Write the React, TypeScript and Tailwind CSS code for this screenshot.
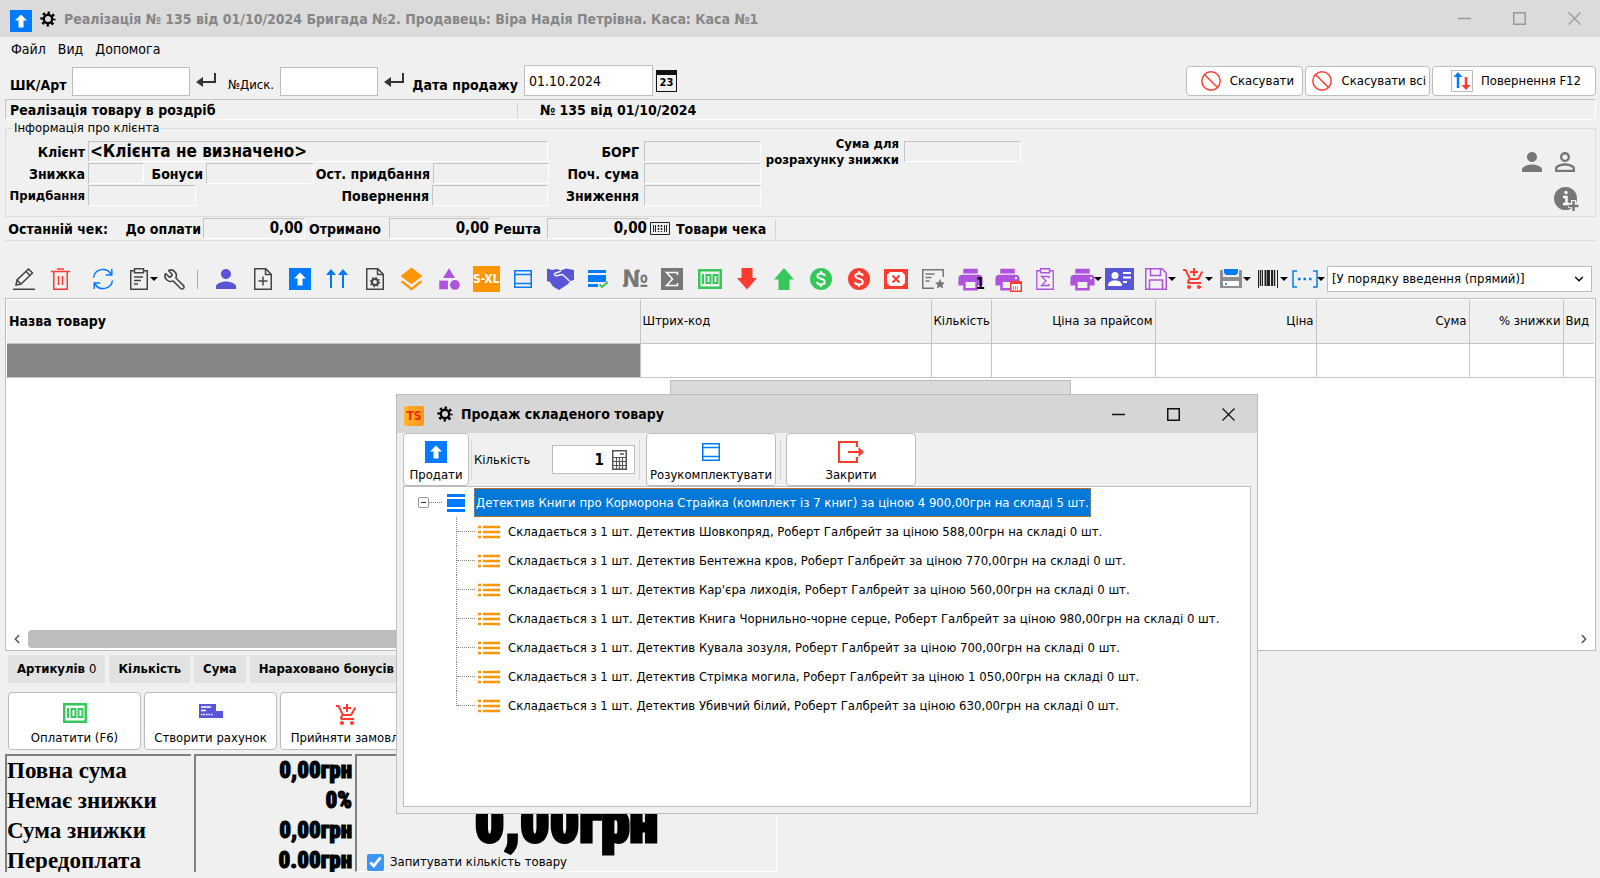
import React, { useState } from 'react';
import { MdAddShoppingCart, MdCategory, MdLayers, MdPerson, MdPersonOutline, MdPrint } from 'react-icons/md';
import { Ban, ChevronDown, ChevronLeft, ChevronRight, Wrench } from 'lucide-react';

interface IconProps {
  w?: number;
  h?: number;
  color?: string;
  children: React.ReactNode;
}

// Pixel-grid icon: one viewBox unit is one pixel
const Icon: React.FC<IconProps> = ({ w = 22, h = 22, color = '#444', children }) => (
  <svg width={w} height={h} viewBox={`0 0 ${w} ${h}`} fill="none" stroke={color} strokeWidth="1.5" className="shrink-0" aria-hidden="true">
    {children}
  </svg>
);

const BLUE = '#007aff';
const RED = '#ff3b30';
const GREEN = '#34c759';
const PURPLE = '#af52de';
const INDIGO = '#5856d6';
const ORANGE = '#ff9500';

const UpBox = () => (
  <Icon>
    <rect width="22" height="22" fill={BLUE} stroke="none" />
    <path d="M11 4.5l6 6h-3.5v7h-5v-7H5z" fill="#fff" stroke="none" />
  </Icon>
);

const Gear = () => (
  <Icon w={16} h={16} color="#000">
    <circle cx="8" cy="8" r="4.2" strokeWidth="2.4" />
    <circle cx="8" cy="8" r="6.3" strokeWidth="2.6" strokeDasharray="2.4 2.55" strokeDashoffset="1.2" />
  </Icon>
);

const EnterArrow = () => (
  <Icon w={20} h={16} color="#333">
    <path d="M19 1v9H5" strokeWidth="2" />
    <path d="M0 10l7-5v10z" fill="#333" stroke="none" />
  </Icon>
);

const Bill = () => (
  <Icon w={24} h={20} color={GREEN}>
    <rect x="1.25" y="1.25" width="21.5" height="17.5" strokeWidth="2.5" />
    <path d="M5 5v10" strokeWidth="2" />
    <rect x="8.5" y="6" width="4" height="8" strokeWidth="2" />
    <rect x="15.5" y="6" width="4" height="8" strokeWidth="2" />
  </Icon>
);

const Cart = () => <MdAddShoppingCart size={24} color={RED} />;

const TableBox = () => (
  <Icon w={18} h={18} color={BLUE}>
    <path d="M.75.75h16.5v16.5H.75zM1 4.5h16M1 13.5h16" />
  </Icon>
);

const Dollar: React.FC<{ color: string }> = ({ color }) => (
  <Icon color={color}>
    <circle cx="11" cy="11" r="11" fill={color} stroke="none" />
    <path d="M14.8 8c-.3-1.7-1.7-2.5-3.8-2.5S7.4 6.500 7.400 8c0 3.600 7.400 2 7.400 6 0 1.700-1.500 2.600-3.800 2.600S7.300 15.600 7 14M11 3v2.500M11 16.500V19" stroke="#fff" strokeWidth="2" />
  </Icon>
);

const Page: React.FC<{ children: React.ReactNode }> = ({ children }) => (
  <Icon w={18}>
    <path d="M.75.75h11l5.500 5.500v15H.75zM11.500 1v5.500H17" />
    {children}
  </Icon>
);

const Star = () => <path d="M18 11l1.500 3.200 3.500.4-2.600 2.300.8 3.600-3.200-1.800-3.200 1.800.8-3.600-2.600-2.300 3.500-.4z" fill="#777" stroke="none" />;

const tools: { label: string; icon: React.ReactNode; menu?: boolean }[] = [
  { label: 'Клієнт', icon: <MdPerson size={30} color={INDIGO} /> },
  { label: 'Новий документ', icon: <Page><path d="M9 8.500v9M4.500 13h9" /></Page> },
  { label: 'Продати', icon: <UpBox /> },
  {
    label: 'Підняти всі',
    icon: <Icon color={BLUE}><path d="M5 2v18M17 2v18" strokeWidth="2" /><path d="M0 7l5-6 5 6zM12 7l5-6 5 6z" fill={BLUE} stroke="none" /></Icon>,
  },
  { label: 'Налаштування документа', icon: <Page><circle cx="9" cy="14" r="3" strokeWidth="2" /><circle cx="9" cy="14" r="4.500" strokeDasharray="1.600 1.900" /></Page> },
  { label: 'Шари', icon: <MdLayers size={29} color={ORANGE} /> },
  { label: 'Категорії', icon: <MdCategory size={26} color={PURPLE} /> },
  {
    label: 'Розміри',
    icon: <span className="flex h-[26px] w-[27px] items-center justify-center bg-[#ff9500] text-[12px] leading-none font-bold text-white">S-XL</span>,
  },
  { label: 'Комплект', icon: <TableBox /> },
  {
    label: 'Угода',
    icon: (
      <Icon w={27} color="#f0f0f0">
        <path d="M0 .500l5 1.500 5-1 4 1.500L19 .500l8 1.500v10l-4 1-2 3-9 6-6-3.500L3 14l-3-1z" fill={INDIGO} stroke="none" />
        <path d="M14 3L7.500 5.500c-1 2 2 3 5 1.500l3-.5 7 6.500" strokeWidth="1.400" />
      </Icon>
    ),
  },
  {
    label: 'Перевірити список',
    icon: <Icon color={BLUE}><path d="M1 2h18v3H1zM1 7h18v7H1zM1 16h10v3H1z" fill={BLUE} stroke="none" /><path d="M12.500 16.500l2.500 2.500 6-5" stroke={GREEN} strokeWidth="2" /></Icon>,
  },
  { label: 'Номер', icon: <span className="text-[24px] leading-none font-bold text-[#777]">№</span> },
  {
    label: 'Підсумок',
    icon: <Icon><rect width="22" height="22" fill="#777" stroke="none" /><path d="M16.500 7V4.500h-11L11.500 11l-6 6.500h11V15" stroke="#fff" /></Icon>,
  },
  { label: 'Оплата', icon: <Bill /> },
  { label: 'Вниз', icon: <Icon><path d="M5.500 0h11v10H21L11 21.500 1 10h4.500z" fill={RED} stroke="none" /></Icon> },
  { label: 'Вгору', icon: <Icon><path d="M5.500 22h11V11.500H21L11 0 1 11.500h4.500z" fill={GREEN} stroke="none" /></Icon> },
  { label: 'Внести гроші', icon: <Dollar color={GREEN} /> },
  { label: 'Вилучити гроші', icon: <Dollar color={RED} /> },
  {
    label: 'Скасувати оплату',
    icon: <Icon w={24} h={20} color={RED}><rect width="24" height="20" fill={RED} stroke="none" /><path d="M6 3h12l3 3v8l-3 3H6l-3-3V6z" fill="#fff" stroke="none" /><path d="M8.500 6.500l7 7M15.500 6.500l-7 7" strokeWidth="2" /></Icon>,
  },
  { label: 'Сертифікат', icon: <Icon color="#777"><path d="M12 20.250H.75V1.750h20.500V9M3.500 6h9M3.500 9.500h6M3.500 13h4" /><Star /></Icon> },
  {
    label: 'Друк 1',
    icon: (
      <span className="relative flex">
        <MdPrint size={29} color={PURPLE} />
        <span className="absolute right-0 bottom-[2px] font-['DejaVu_Sans_Mono',monospace] text-[15px] leading-none font-bold text-black">1</span>
      </span>
    ),
  },
  {
    label: 'Друк за датою',
    icon: (
      <span className="relative flex">
        <MdPrint size={29} color={PURPLE} />
        <span className="absolute right-0 bottom-[2px]">
          <Icon w={12} h={11} color={RED}><path d="M.75.75h10.500v9.500H.75z" fill="#fff" /><path d="M0 2h12" strokeWidth="2" /><path d="M3 6h6M3 8h6" stroke="#444" strokeWidth="1" strokeDasharray="1 1" /></Icon>
        </span>
      </span>
    ),
  },
  {
    label: 'Звіт',
    icon: <Icon w={18} color={PURPLE}><path d="M4 2.750H.75v18.500h16.500V2.750H14M4.500.75h9v4h-9zM13 10V8.500H5.500L10 13l-4.500 4.500H13V16" strokeWidth="1.300" /></Icon>,
  },
  { label: 'Друк', icon: <MdPrint size={29} color={PURPLE} />, menu: true },
  {
    label: 'Картка клієнта',
    icon: <Icon w={29}><rect width="29" height="22" fill={INDIGO} stroke="none" /><circle cx="10" cy="7.500" r="3.500" fill="#fff" stroke="none" /><path d="M3 18c0-4 3-5.500 7-5.500s7 1.500 7 5.500z" fill="#fff" stroke="none" /><path d="M18 5h8M18 9.500h8M18 14h4" stroke="#fff" strokeWidth="2" /></Icon>,
  },
  {
    label: 'Зберегти',
    icon: <Icon color={PURPLE}><path d="M.75.75H17l4.250 4.250v16.250H.75zM5.500 1v6.500h10V1M4.500 21v-9h13v9" /></Icon>,
    menu: true,
  },
  { label: 'Кошик', icon: <Cart />, menu: true },
  {
    label: 'Диск',
    icon: <Icon><path d="M0 2h3v7h16V2h3v18H0z" fill="#8e8e93" stroke="none" /><path d="M4 1h14v4l-2 2H6L4 5z" fill={BLUE} stroke="none" /><path d="M3 13h16v5H3z" fill="#fff" stroke="none" /><path d="M5 16h2" stroke={BLUE} /></Icon>,
    menu: true,
  },
  {
    label: 'Штрих-код',
    icon: <Icon w={20} h={18} color="#222"><path d="M.500 0v18M4.500 0v16M19.500 0v18" strokeWidth="1" /><path d="M2.500 0v16M16.500 0v16" strokeWidth="1.500" /><path d="M7.500 0v16M14 0v16" strokeWidth="2" /><path d="M10.500 0v16" strokeWidth="3" /></Icon>,
    menu: true,
  },
  {
    label: 'Інтервал',
    icon: <Icon w={26} h={18} color={BLUE}><path d="M5 1H1v16h4M21 1h4v16h-4" /><path d="M6 9h14" strokeWidth="2.500" strokeDasharray="2.500 3" /></Icon>,
    menu: true,
  },
];

const ToolButton: React.FC<{ label: string; menu?: boolean; children: React.ReactNode }> = ({ label, menu, children }) => (
  <button aria-label={label} className="relative flex h-7 flex-1 items-center justify-center">
    {children}
    {menu && <span className="absolute -right-px border-x-4 border-t-4 border-x-transparent border-t-black" />}
  </button>
);

// Sunken read-only cell
const Cell: React.FC<{ className: string; children?: React.ReactNode }> = ({ className, children }) => (
  <output className={`block h-[21px] shrink-0 border border-t-[#c4c4c4] border-r-white border-b-white border-l-[#c4c4c4] ${className}`}>{children}</output>
);

const Label: React.FC<{ className: string; children: React.ReactNode }> = ({ className, children }) => (
  <span className={`flex shrink-0 justify-end font-bold whitespace-nowrap ${className}`}>{children}</span>
);

const columns = [
  { title: 'Назва товару', width: 'w-auto', align: 'text-left text-[14px] font-bold' },
  { title: 'Штрих-код', width: 'w-[291px]', align: 'text-left font-normal' },
  { title: 'Кількість', width: 'w-[60px]', align: 'text-right font-normal' },
  { title: 'Ціна за прайсом', width: 'w-[164px]', align: 'text-right font-normal' },
  { title: 'Ціна', width: 'w-[161px]', align: 'text-right font-normal' },
  { title: 'Сума', width: 'w-[153px]', align: 'text-right font-normal' },
  { title: '% знижки', width: 'w-[94px]', align: 'text-right font-normal' },
  { title: 'Вид', width: 'w-[31px]', align: 'text-left font-normal' },
];

const books = [
  { title: 'Шовкопряд', price: '588,00' },
  { title: 'Бентежна кров', price: '770,00' },
  { title: "Кар'єра лиходія", price: '560,00' },
  { title: 'Книга Чорнильно-чорне серце', price: '980,00' },
  { title: 'Кувала зозуля', price: '700,00' },
  { title: 'Стрімка могила', price: '1 050,00' },
  { title: 'Убивчий білий', price: '630,00' },
];

const totals = [
  { label: 'Повна сума', value: '0,00грн' },
  { label: 'Немає знижки', value: '0%' },
  { label: 'Сума знижки', value: '0,00грн' },
  { label: 'Передоплата', value: '0.00грн' },
];

const WindowButtons: React.FC<{ color: string }> = ({ color }) => (
  <div className="ml-auto flex items-center gap-[42px]">
    <button aria-label="Згорнути"><Icon w={13} h={13} color={color}><path d="M0 6.500h13" /></Icon></button>
    <button aria-label="Розгорнути"><Icon w={13} h={13} color={color}><path d="M.75.75h11.500v11.500H.75z" /></Icon></button>
    <button aria-label="Закрити вікно"><Icon w={13} h={13} color={color}><path d="M.500.500l12 12M12.500.500l-12 12" strokeWidth="1.200" /></Icon></button>
  </div>
);

const SaleDialog = () => {
  const [quantity, setQuantity] = useState('1');
  const button = 'flex h-[53px] shrink-0 flex-col items-center justify-between rounded border border-[#bdbdbd] bg-white pt-[7px] pb-[2px] whitespace-nowrap';

  return (
    <div role="dialog" aria-labelledby="dialog-title" className="absolute top-[394px] left-[396px] w-[862px] border border-[#bdbdbd] bg-[#f0f0f0]">
      <div className="flex h-[38px] items-center bg-[#d6d6d6] pr-[22px] pl-[7px]">
        <span className="mt-1 flex size-5 items-center justify-center rounded-[2px] bg-linear-to-r from-[#ffb629] to-[#ff961a] text-[12px] font-bold text-[#f02a10]">TS</span>
        <span className="ml-[13px]"><Gear /></span>
        <h2 id="dialog-title" className="ml-2 text-[14px] font-bold">Продаж складеного товару</h2>
        <WindowButtons color="#111" />
      </div>
      <div className="px-[6px] pb-[6px]">
        <div className="flex h-[53px] items-center">
          <button className={`w-[66px] ${button}`}><UpBox />Продати</button>
          <span className="mx-[2px] h-10 w-px bg-[#d4d4d4]" />
          <label htmlFor="quantity" className="w-[78px]">Кількість</label>
          <div className="flex h-[29px] w-[83px] items-center border border-[#bdbdbd] bg-white pr-[7px]">
            <input id="quantity" value={quantity} onChange={(e) => setQuantity(e.target.value)} className="w-full min-w-0 pr-2 text-right text-[15px] font-bold outline-none" />
            <Icon w={15} h={20} color="#555">
              <path d="M.75.75h13.500v18.500H.75z" />
              <path d="M8 4h4" strokeWidth="1.500" />
              <path d="M1 7.500h13M1 11.500h13M1 15.500h13M4.500 7v12M7.500 7v12M10.500 7v12" strokeWidth="1.200" />
            </Icon>
          </div>
          <span className="ml-1 mr-[6px] h-10 w-px bg-[#d4d4d4]" />
          <button className={`w-[130px] ${button}`}><span className="pt-[2px]"><TableBox /></span>Розукомплектувати</button>
          <span className="mx-[4px] h-10 w-px bg-[#d4d4d4]" />
          <button className={`ml-px w-[130px] ${button}`}>
            <Icon w={26} color={RED}>
              <path d="M19 6V1H1v20h18v-5" strokeWidth="2" />
              <path d="M10 11h12" strokeWidth="2" />
              <path d="M20.500 6L26 11l-5.500 5z" fill={RED} stroke="none" />
            </Icon>
            Закрити
          </button>
        </div>
        <div role="tree" className="h-[321px] border border-[#bdbdbd] bg-white pt-px">
          <div role="treeitem" className="flex h-[29px] items-center pl-[14px]">
            <button aria-label="Згорнути гілку" className="flex size-[11px] items-center justify-center rounded-[2px] border border-[#999]"><span className="h-px w-[5px] bg-[#335]" /></button>
            <span className="w-[13px] border-t border-dotted border-[#888]" />
            <span className="ml-[5px]">
              <Icon w={18} h={18}><path d="M0 0h18v3H0zM0 5h18v8H0zM0 15h18v3H0z" fill={BLUE} stroke="none" /></Icon>
            </span>
            <span className="ml-[9px] flex h-[29px] items-center border border-dotted border-[#d98a3a] bg-[#0078d7] px-px whitespace-nowrap text-white">
              Детектив Книги про Корморона Страйка (комплект із 7 книг) за ціною 4 900,00грн на складі 5 шт.
            </span>
          </div>
          {books.map((book, index) => (
            <div key={book.title} role="treeitem" className="flex h-[29px] items-center pl-[52px]">
              <span className={`w-px self-start border-l border-dotted border-[#888] ${index === books.length - 1 ? 'h-[15px]' : 'h-[29px]'}`} />
              <span className="w-[18px] border-t border-dotted border-[#888]" />
              <span className="ml-[3px]">
                <Icon w={22} h={14} color={ORANGE}>
                  <path d="M5 2h17M5 7h17M5 12h17M0 2h3M0 7h3M0 12h3" strokeWidth="2.400" />
                </Icon>
              </span>
              <span className="ml-2 whitespace-nowrap">
                Складається з 1 шт. Детектив {book.title}, Роберт Галбрейт за ціною {book.price}грн на складі 0 шт.
              </span>
            </div>
          ))}
        </div>
      </div>
    </div>
  );
};

export default function App() {
  const [date, setDate] = useState('01.10.2024');
  const [ask, setAsk] = useState(true);
  const field = 'border border-[#bdbdbd] bg-white outline-none';
  const topButton = 'flex h-[30px] items-center justify-end rounded border border-[#bdbdbd] bg-white whitespace-nowrap';
  const payButton = 'flex h-[58px] w-[133px] shrink-0 flex-col items-center justify-between rounded border border-[#bdbdbd] bg-white pt-[10px] pb-[3px] whitespace-nowrap';
  const chip = 'flex h-7 items-center bg-[#e1e3e2] px-[9px] font-bold whitespace-nowrap';

  return (
    <div className="relative flex min-h-screen flex-col overflow-hidden bg-[#f0f0f0] pb-[6px] font-['DejaVu_Sans_Condensed','Noto_Sans',sans-serif] text-[13px] leading-4 text-black">
      {/* Title bar */}
      <header className="flex h-[37px] items-center bg-[#dbdbdb] pr-[19px] pl-[10px]">
        <span className="mt-[5px]"><UpBox /></span>
        <span className="ml-2"><Gear /></span>
        <h1 className="ml-2 text-[14px] font-bold text-[#868686]">Реалізація № 135 від 01/10/2024 Бригада №2. Продавець: Віра Надія Петрівна. Каса: Каса №1</h1>
        <WindowButtons color="#999" />
      </header>

      <nav className="flex h-6 items-center gap-3 pl-[11px] text-[14px]">
        <button>Файл</button>
        <button>Вид</button>
        <button>Допомога</button>
      </nav>

      {/* Scan row */}
      <div className="flex h-[38px] items-end gap-[6px] pr-1 pb-[3px] pl-[10px]">
        <label htmlFor="sku" className="mb-[3px] w-[56px] text-[14px] font-bold whitespace-nowrap">ШК/Арт</label>
        <input id="sku" className={`h-[29px] w-[118px] ${field}`} />
        <button aria-label="Знайти товар" className="mb-2"><EnterArrow /></button>
        <label htmlFor="card" className="mb-[3px] w-[52px] text-right">№Диск.</label>
        <input id="card" className={`h-[29px] w-[98px] ${field}`} />
        <button aria-label="Знайти картку" className="mb-2"><EnterArrow /></button>
        <label htmlFor="date" className="mb-[3px] w-[108px] text-right text-[14px] font-bold whitespace-nowrap">Дата продажу</label>
        <div className="flex items-center gap-[3px]">
          <input id="date" value={date} onChange={(e) => setDate(e.target.value)} className={`h-[31px] w-[129px] px-1 text-[14px] ${field}`} />
          <button aria-label="Календар" className="flex h-[22px] w-[21px] items-center justify-center border border-t-[5px] border-[#111] text-[11px] leading-none font-bold">23</button>
        </div>
        <div className="ml-auto flex gap-[2px]">
          <button className={`w-[117px] gap-2 pr-[8px] ${topButton}`}><Ban size={22} strokeWidth={1.6} color={RED} />Скасувати</button>
          <button className={`w-[125px] gap-2 pr-[3px] ${topButton}`}><Ban size={22} strokeWidth={1.6} color={RED} />Скасувати всі</button>
          <button className={`w-[164px] gap-2 pr-[14px] ${topButton}`}>
            <Icon>
              <path d="M.500.500h21v21H.500z" stroke="#bbb" strokeWidth="1" />
              <path d="M7 4v14" stroke={BLUE} strokeWidth="2.500" />
              <path d="M2.500 7L7 2l4.500 5z" fill={BLUE} stroke="none" />
              <path d="M15 7v10" stroke={RED} strokeWidth="2.500" />
              <path d="M10.500 15l4.500 5 4.500-5z" fill={RED} stroke="none" />
            </Icon>
            Повернення F12
          </button>
        </div>
      </div>

      <div className="mr-1 ml-[5px] flex h-[21px] items-center border border-t-[#c4c4c4] border-r-white border-b-white border-l-[#c4c4c4] text-[14px] font-bold">
        <span className="flex h-4 w-[512px] items-center border-r border-[#d4d4d4] pl-1">Реалізація товару в роздріб</span>
        <span className="pl-[22px]">№ 135 від 01/10/2024</span>
      </div>

      {/* Client info */}
      <fieldset className="mr-1 ml-[5px] flex h-[97px] border border-[#dcdcdc]">
        <legend className="ml-[7px] px-px text-[13px]">Інформація про клієнта</legend>
        <div className="flex w-full items-start pt-[5px] text-[14px]">
          <div className="flex flex-col gap-px">
            <div className="flex items-center gap-[3px]">
              <Label className="w-[79px]">Клієнт</Label>
              <Cell className="w-[460px] pl-px text-[17px] leading-[18px] font-bold">&lt;Клієнта не визначено&gt;</Cell>
            </div>
            <div className="flex items-center gap-[3px]">
              <Label className="w-[79px]">Знижка</Label>
              <Cell className="w-[56px]" />
              <Label className="w-[56px]">Бонуси</Label>
              <Cell className="w-[108px]" />
              <Label className="w-[113px]">Ост. придбання</Label>
              <Cell className="w-[116px]" />
            </div>
            <div className="flex items-center gap-[3px]">
              <Label className="w-[79px] text-[13px]">Придбання</Label>
              <Cell className="w-[108px]" />
              <Label className="w-[230px]">Повернення</Label>
              <Cell className="w-[116px]" />
            </div>
          </div>
          <div className="flex flex-col gap-px">
            {['БОРГ', 'Поч. сума', 'Зниження'].map((label) => (
              <div key={label} className="flex items-center gap-[5px]">
                <Label className="w-[90px]">{label}</Label>
                <Cell className="w-[117px]" />
              </div>
            ))}
          </div>
          <div className="flex gap-[5px] text-[13px]">
            <div className="-mt-[5px] w-[138px]">
              <Label className="w-full">Сума для</Label>
              <Label className="w-full">розрахунку знижки</Label>
            </div>
            <Cell className="w-[117px]" />
          </div>
          <div className="mt-[6px] mr-[15px] ml-auto flex w-[63px] flex-wrap justify-between gap-y-[10px]">
            <button aria-label="Обрати клієнта"><MdPerson size={30} color="#777" /></button>
            <button aria-label="Очистити клієнта"><MdPersonOutline size={30} color="#777" /></button>
            <button aria-label="Інформація" className="mr-px ml-auto">
              <Icon w={25} h={25}>
                <circle cx="11.500" cy="11.500" r="11.500" fill="#777" stroke="none" />
                <path d="M9 10h3.500v7M9 17h7" stroke="#fff" strokeWidth="2.400" />
                <circle cx="12" cy="5.500" r="1.700" fill="#fff" stroke="none" />
                <path d="M19.500 13v11M14 18.500h11" stroke="#f0f0f0" strokeWidth="5" />
                <path d="M19.500 14v10M14.500 19h10" stroke="#777" strokeWidth="2.400" />
              </Icon>
            </button>
          </div>
        </div>
      </fieldset>

      {/* Last receipt */}
      <div className="mr-1 ml-[5px] flex h-6 items-center border-b border-[#dcdcdc] pl-[5px] text-[14px]">
        <Label className="w-[98px]">Останній чек:</Label>
        <Label className="w-[95px] pr-[2px]">До оплати</Label>
        <Cell className="w-[102px] pr-px text-right text-[15px] leading-[18px] font-bold">0,00</Cell>
        <Label className="w-[84px] pr-2">Отримано</Label>
        <Cell className="w-[102px] pr-px text-right text-[15px] leading-[18px] font-bold">0,00</Cell>
        <Label className="w-[56px] pr-[6px]">Решта</Label>
        <Cell className="w-[102px] pr-px text-right text-[15px] leading-[18px] font-bold">0,00</Cell>
        <button className="flex items-center gap-[6px] pl-px font-bold whitespace-nowrap">
          <Icon w={20} h={13} color="#222">
            <path d="M.500.500h19v12H.500z" strokeWidth="1" />
            <path d="M3.500 3v7M5.500 3v7M14.500 3v7M16.500 3v7" strokeWidth="1" />
            <path d="M8.500 3v7M11.500 3v7" strokeWidth="1.500" strokeDasharray="2 1" />
          </Icon>
          Товари чека
        </button>
        <span className="ml-[9px] h-5 w-px bg-[#d4d4d4]" />
      </div>

      {/* Toolbar */}
      <div className="mt-[23px] mr-2 ml-[6px] flex h-[30px] items-center">
        <div className="flex w-[187px] items-center">
          <ToolButton label="Редагувати"><Icon><path d="M0 21.250h22M3 17l1-5L15.500 1l4 4L8 16zM13 3.500l4 4M4 12l4 4" /></Icon></ToolButton>
          <ToolButton label="Видалити"><Icon w={19} color={RED}><path d="M0 3.500h19M6 1h7M2.750 4v17.250h13.500V4M7.500 8v9M11.500 8v9" /></Icon></ToolButton>
          <span className="w-[6px]" />
          <ToolButton label="Оновити"><Icon color={BLUE}><path d="M1.500 9.500A9.500 9.500 0 0 1 19 6M20.500 12.500A9.500 9.500 0 0 1 3 16M19.800 1v6h-6M2.200 21v-6h6" /></Icon></ToolButton>
          <ToolButton label="Буфер" menu><Icon w={18}><path d="M4 2.750H.75v18.500h16.500V2.750H14M4.500.75h9v4h-9zM4 9h9M4 12.500h7M4 16h4" /></Icon></ToolButton>
          <ToolButton label="Сервіс"><Wrench size={23} strokeWidth={1.6} color="#444" className="-scale-x-100" /></ToolButton>
        </div>
        <span className="mr-[9px] ml-1 h-[19px] w-px bg-[#aaa]" />
        <div className="flex flex-1 items-center">
          {tools.map((tool) => (
            <ToolButton key={tool.label} label={tool.label} menu={tool.menu}>{tool.icon}</ToolButton>
          ))}
        </div>
        <div className="relative ml-[3px] flex w-[265px] items-center">
          <select aria-label="Порядок сортування" className="h-[26px] w-full appearance-none border border-[#bdbdbd] bg-white px-1 text-[13px] outline-none">
            <option>[У порядку введення (прямий)]</option>
          </select>
          <ChevronDown size={14} strokeWidth={2.4} className="pointer-events-none absolute right-[6px]" />
        </div>
      </div>

      {/* Goods table */}
      <div className="mt-1 mr-1 ml-[5px] flex min-h-[352px] flex-1 flex-col border border-[#bdbdbd] bg-white px-px pt-px pb-[2px]">
        <table className="w-full table-fixed border-collapse">
          <thead>
            <tr className="h-[43px] bg-[#f0f0f0]">
              {columns.map((column) => (
                <th key={column.title} className={`border-r border-b border-[#c4c4c4] px-[2px] whitespace-nowrap last:border-r-0 ${column.width} ${column.align}`}>{column.title}</th>
              ))}
            </tr>
          </thead>
          <tbody>
            <tr className="h-[34px]">
              {columns.map((column) => (
                <td key={column.title} className="border-r border-b border-[#c4c4c4] first:bg-[#858585] last:border-r-0" />
              ))}
            </tr>
          </tbody>
        </table>
        <div className="mt-auto flex h-[19px] items-center justify-between px-[3px]">
          <button aria-label="Ліворуч"><ChevronLeft size={14} strokeWidth={2.6} color="#555" /></button>
          <span className="mr-auto ml-1 h-[18px] w-[70%] rounded-sm bg-[#bdbdbd]" />
          <button aria-label="Праворуч"><ChevronRight size={14} strokeWidth={2.6} color="#555" /></button>
        </div>
      </div>

      <div className="mt-1 ml-2 flex gap-1">
        <span className={chip}>Артикулів&nbsp;<span className="font-normal">0</span></span>
        <span className={chip}>Кількість</span>
        <span className={chip}>Сума</span>
        <span className={chip}>Нараховано бонусів</span>
      </div>

      <div className="mt-[9px] ml-2 flex gap-[3px]">
        <button className={payButton}><Bill />Оплатити (F6)</button>
        <button className={payButton}>
          <Icon w={24} h={16}>
            <path d="M0 1h17v7h7v7H0z" fill={INDIGO} stroke="none" />
            <path d="M2 4h10M2 7.500h5" stroke="#fff" />
            <path d="M2 11.500h12" stroke="#fff" strokeDasharray="1.500 1" />
          </Icon>
          Створити рахунок
        </button>
        <button className={payButton}><Cart />Прийняти замовл.</button>
      </div>

      {/* Totals */}
      <div className="mt-1 ml-[5px] flex h-[118px] w-[772px] gap-[3px] overflow-hidden text-[23px] leading-[30px] font-bold">
        <div className="w-[186px] border-t-2 border-l-2 border-[#808080] font-['Liberation_Serif',serif]">
          {totals.map((row) => <div key={row.label} className="whitespace-nowrap">{row.label}</div>)}
        </div>
        <div className="w-[158px] border-t-2 border-l-2 border-[#808080] text-right font-['Impact','Liberation_Sans_Narrow','Roboto_Condensed','DejaVu_Sans_Condensed',sans-serif] font-black [-webkit-text-stroke:1px_black]">
          {totals.map((row) => <div key={row.label}>{row.value}</div>)}
        </div>
        <div className="flex flex-1 flex-col justify-end border-t-2 border-r border-b border-l-2 border-t-[#808080] border-r-white border-b-white border-l-[#808080]">
          <div className="text-center font-['Impact','Liberation_Sans_Narrow','Roboto_Condensed','DejaVu_Sans_Condensed',sans-serif] text-[58px] leading-[62px] font-black [-webkit-text-stroke:3px_black]">0,00грн</div>
          <label className="flex h-[18px] items-center gap-[6px] pl-[10px] text-[13px] leading-4 font-normal">
            <input type="checkbox" checked={ask} onChange={() => setAsk(!ask)} className="size-[17px] accent-[#3b95f5]" />
            Запитувати кількість товару
          </label>
        </div>
      </div>

      {/* Window left open under the dialog */}
      <div className="absolute top-[380px] left-[670px] h-4 w-[401px] border border-[#bdbdbd] bg-[#dadada]" />
      <SaleDialog />
    </div>
  );
}
